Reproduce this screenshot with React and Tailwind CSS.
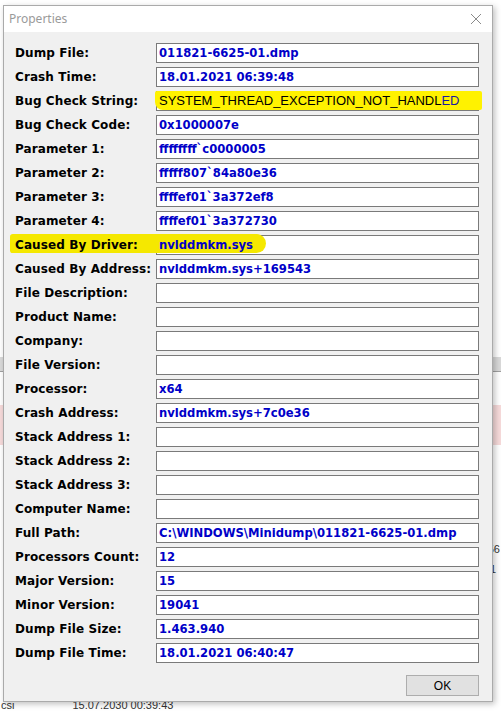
import React from 'react';

const rows = [
  ['Dump File:', '011821-6625-01.dmp'],
  ['Crash Time:', '18.01.2021 06:39:48'],
  ['Bug Check String:', null, 'bugcheck'],
  ['Bug Check Code:', '0x1000007e'],
  ['Parameter 1:', 'ffffffff`c0000005'],
  ['Parameter 2:', 'fffff807`84a80e36'],
  ['Parameter 3:', 'ffffef01`3a372ef8'],
  ['Parameter 4:', 'ffffef01`3a372730'],
  ['Caused By Driver:', 'nvlddmkm.sys', 'driver'],
  ['Caused By Address:', 'nvlddmkm.sys+169543'],
  ['File Description:', ''],
  ['Product Name:', ''],
  ['Company:', ''],
  ['File Version:', ''],
  ['Processor:', 'x64'],
  ['Crash Address:', 'nvlddmkm.sys+7c0e36'],
  ['Stack Address 1:', ''],
  ['Stack Address 2:', ''],
  ['Stack Address 3:', ''],
  ['Computer Name:', ''],
  ['Full Path:', 'C:\\WINDOWS\\Minidump\\011821-6625-01.dmp'],
  ['Processors Count:', '12'],
  ['Major Version:', '15'],
  ['Minor Version:', '19041'],
  ['Dump File Size:', '1.463.940'],
  ['Dump File Time:', '18.01.2021 06:40:47'],
];

function Row({ label, value, kind }) {
  return (
    <div className="relative flex h-[24px] items-center">
      {/* highlighter stroke behind the label */}
      {kind === 'driver' && (
        <div className="absolute left-[-5px] top-[1px] h-[19px] w-[255px] rounded-l-[3px] rounded-r-[10px] bg-[#f5e800]" />
      )}
      <div className="relative w-[141px] shrink-0 text-[12px] font-bold tracking-[0.1px] text-black">{label}</div>
      <div className="relative h-[20px] w-[323px] border border-[#7a7a7a] bg-white">
        {kind === 'driver' && (
          <div className="absolute left-[-1px] top-[-2px] h-[19px] w-[110px] rounded-r-[10px] bg-[#f5e800]" />
        )}
        {kind === 'bugcheck' ? (
          <>
            <div className="absolute left-[-2px] top-[-1px] h-[19px] w-[327px] rounded-[2px] rounded-bl-[8px] bg-[#fff200]" />
            <div className="relative pl-[2px] text-[13px] leading-[18px] text-black [font-family:'Liberation_Sans',sans-serif]">
              SYSTEM_THREAD_EXCEPTION_NOT_HANDL<span className="text-[#1a1aa0]">ED</span>
            </div>
          </>
        ) : (
          <div className="relative pl-[2px] text-[11.6px] font-bold leading-[18px] text-[#0000c8]">{value}</div>
        )}
      </div>
    </div>
  );
}

export default function App() {
  return (
    <div className="relative h-[712px] w-[501px] overflow-hidden bg-white [font-family:'DejaVu_Sans',sans-serif]">
      {/* app behind the dialog */}
      <div className="flex flex-col text-[11px] text-[#333] [font-family:'Liberation_Sans',sans-serif]">
        <div className="h-[357px]" />
        <div className="h-[14px] bg-[#d9d9d9]" />
        <div className="h-px bg-[#a0a0a0]" />
        <div className="h-[33px]" />
        <div className="h-[40px] bg-[#f6dada]" />
        <div className="h-[96px]" />
        <div className="flex h-[20px] justify-end pr-[1px]">56</div>
        <div className="flex h-[20px] justify-end pr-[5px]">1</div>
        <div className="h-[116px]" />
        <div className="flex h-[14px] gap-[58px] pl-[1px]">
          <span>csi</span>
          <span>15.07.2030 00:39:43</span>
        </div>
      </div>

      {/* dialog window */}
      <div className="absolute left-[3px] top-[5px] flex h-[697px] w-[490px] flex-col border border-[#aaaaaa] bg-[#f0f0f0] shadow-[2px_2px_6px_rgba(0,0,0,0.25)]">
        <div className="flex h-[26px] shrink-0 items-center justify-between bg-white pl-[5px] pr-[10px]">
          <span className="text-[12px] text-[#9a9a9a] [font-family:'Noto_Sans',sans-serif]">Properties</span>
          <svg width="12" height="12" viewBox="0 0 12 12">
            <path d="M1 1 L11 11 M11 1 L1 11" stroke="#8a8a8a" strokeWidth="1" />
          </svg>
        </div>
        <div className="flex flex-col pl-[11px] pt-[9px]">
          {rows.map(([label, value, kind]) => (
            <Row key={label} label={label} value={value} kind={kind} />
          ))}
        </div>
        <div className="flex justify-end pr-[13px] pt-[10px]">
          <button className="h-[21px] w-[73px] border border-[#adadad] bg-[#e1e1e1] text-[12px] text-black [font-family:'Liberation_Sans',sans-serif]">
            OK
          </button>
        </div>
      </div>
    </div>
  );
}
